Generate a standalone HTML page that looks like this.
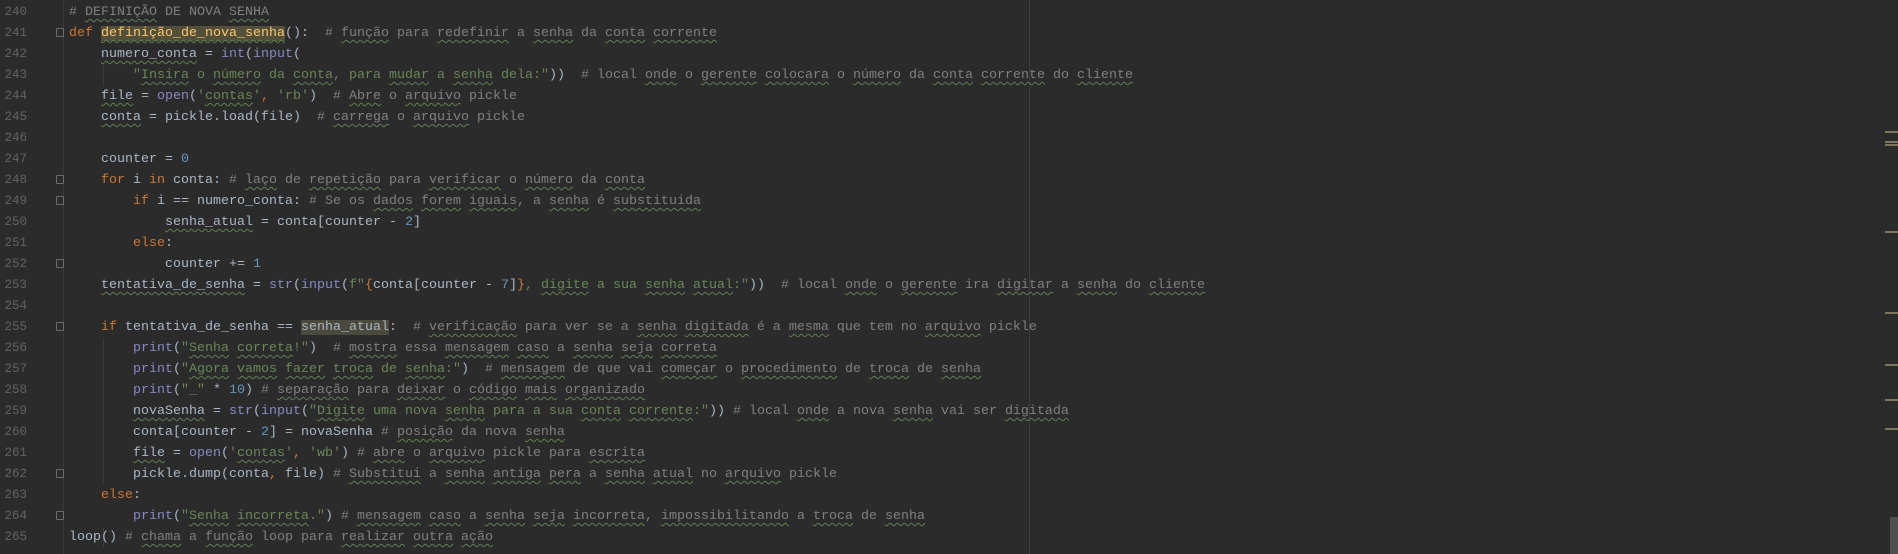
<!DOCTYPE html><html><head><meta charset="utf-8"><style>
body{margin:0;width:1898px;height:554px;background:#2b2b2b;overflow:hidden;position:relative;font-family:"Liberation Mono",monospace;font-size:13.33px;color:#a9b7c6}
.g{position:absolute;left:0;top:2px;width:27px;text-align:right;color:#606366;line-height:21px;font-size:12.5px}
.sep{position:absolute;left:63px;top:0;width:1px;height:554px;background:#3a3a3a}
.rm{position:absolute;left:1029px;top:0;width:1px;height:554px;background:#3d3d3d}
.code{position:absolute;left:69px;top:2px;line-height:21px;white-space:pre}
.k{color:#cc7832}.s{color:#6a8759}.c{color:#808080}.n{color:#6897bb}.b{color:#8888c6}
.u{text-decoration:underline wavy #5f7f4f;text-decoration-thickness:1px;text-underline-offset:3px}
.h1{background:#52503a;color:#ffc66d}.h2{background:#4b4a3c}
.f{position:absolute;left:56px;width:8px;height:9px;border:1px solid #6b6b6b;box-sizing:border-box;border-radius:1px}
.ig{position:absolute;width:1px;background:#3b3b3b}
.m{position:absolute;left:1885px;width:13px;height:2px;background:#7f7560}
.sb{position:absolute;left:1890px;top:517px;width:8px;height:37px;background:#4f4f4f}
</style></head><body>
<div class="sep"></div><div class="rm"></div>
<div class="g">240<br>241<br>242<br>243<br>244<br>245<br>246<br>247<br>248<br>249<br>250<br>251<br>252<br>253<br>254<br>255<br>256<br>257<br>258<br>259<br>260<br>261<br>262<br>263<br>264<br>265</div>
<div class="f" style="top:28px"></div>
<div class="f" style="top:175px"></div>
<div class="f" style="top:196px"></div>
<div class="f" style="top:259px"></div>
<div class="f" style="top:322px"></div>
<div class="f" style="top:469px"></div>
<div class="f" style="top:511px"></div>
<div class="ig" style="left:103px;top:65px;height:21px"></div>
<div class="ig" style="left:103px;top:338px;height:147px"></div>
<div class="ig" style="left:103px;top:527px;height:21px"></div>
<div class="code"><span class="c"># <span class="u">DEFINIÇÃO</span> DE NOVA <span class="u">SENHA</span></span>
<span class="k">def </span><span class="h1 u">definição_de_nova_senha</span>():  <span class="c"># <span class="u">função</span> para <span class="u">redefinir</span> a <span class="u">senha</span> da <span class="u">conta</span> <span class="u">corrente</span></span>
    <span class="u">numero_conta</span> = <span class="b">int</span>(<span class="b">input</span>(
        <span class="s">"<span class="u">Insira</span> o <span class="u">número</span> da <span class="u">conta</span>, para <span class="u">mudar</span> a <span class="u">senha</span> dela:"</span>))  <span class="c"># local <span class="u">onde</span> o <span class="u">gerente</span> <span class="u">colocara</span> o <span class="u">número</span> da <span class="u">conta</span> <span class="u">corrente</span> do <span class="u">cliente</span></span>
    <span class="u">file</span> = <span class="b">open</span>(<span class="s">'<span class="u">contas</span>'</span><span class="k">, </span><span class="s">'rb'</span>)  <span class="c"># <span class="u">Abre</span> o <span class="u">arquivo</span> pickle</span>
    <span class="u">conta</span> = pickle.load(file)  <span class="c"># <span class="u">carrega</span> o <span class="u">arquivo</span> pickle</span>

    counter = <span class="n">0</span>
    <span class="k">for </span>i <span class="k">in </span>conta: <span class="c"># <span class="u">laço</span> de <span class="u">repetição</span> para <span class="u">verificar</span> o <span class="u">número</span> da <span class="u">conta</span></span>
        <span class="k">if </span>i == numero_conta: <span class="c"># Se os <span class="u">dados</span> <span class="u">forem</span> <span class="u">iguais</span>, a <span class="u">senha</span> é <span class="u">substituida</span></span>
            <span class="u">senha_atual</span> = conta[counter - <span class="n">2</span>]
        <span class="k">else</span>:
            counter += <span class="n">1</span>
    <span class="u">tentativa_de_senha</span> = <span class="b">str</span>(<span class="b">input</span>(<span class="s">f"</span><span class="k">{</span>conta[counter - <span class="n">7</span>]<span class="k">}</span><span class="s">, <span class="u">digite</span> a sua <span class="u">senha</span> <span class="u">atual</span>:"</span>))  <span class="c"># local <span class="u">onde</span> o <span class="u">gerente</span> ira <span class="u">digitar</span> a <span class="u">senha</span> do <span class="u">cliente</span></span>

    <span class="k">if </span>tentativa_de_senha == <span class="h2">senha_atual</span>:  <span class="c"># <span class="u">verificação</span> para ver se a <span class="u">senha</span> <span class="u">digitada</span> é a <span class="u">mesma</span> que tem no <span class="u">arquivo</span> pickle</span>
        <span class="b">print</span>(<span class="s">"<span class="u">Senha</span> <span class="u">correta</span>!"</span>)  <span class="c"># <span class="u">mostra</span> essa <span class="u">mensagem</span> <span class="u">caso</span> a <span class="u">senha</span> <span class="u">seja</span> <span class="u">correta</span></span>
        <span class="b">print</span>(<span class="s">"<span class="u">Agora</span> <span class="u">vamos</span> <span class="u">fazer</span> <span class="u">troca</span> de <span class="u">senha</span>:"</span>)  <span class="c"># <span class="u">mensagem</span> de que vai <span class="u">começar</span> o <span class="u">procedimento</span> de <span class="u">troca</span> de <span class="u">senha</span></span>
        <span class="b">print</span>(<span class="s">"_"</span> * <span class="n">10</span>) <span class="c"># <span class="u">separação</span> para <span class="u">deixar</span> o <span class="u">código</span> <span class="u">mais</span> <span class="u">organizado</span></span>
        <span class="u">novaSenha</span> = <span class="b">str</span>(<span class="b">input</span>(<span class="s">"<span class="u">Digite</span> uma nova <span class="u">senha</span> para a sua <span class="u">conta</span> <span class="u">corrente</span>:"</span>)) <span class="c"># local <span class="u">onde</span> a nova <span class="u">senha</span> vai ser <span class="u">digitada</span></span>
        conta[counter - <span class="n">2</span>] = novaSenha <span class="c"># <span class="u">posição</span> da nova <span class="u">senha</span></span>
        <span class="u">file</span> = <span class="b">open</span>(<span class="s">'<span class="u">contas</span>'</span><span class="k">, </span><span class="s">'wb'</span>) <span class="c"># <span class="u">abre</span> o <span class="u">arquivo</span> pickle para <span class="u">escrita</span></span>
        pickle.dump(conta<span class="k">, </span>file) <span class="c"># <span class="u">Substitui</span> a <span class="u">senha</span> <span class="u">antiga</span> <span class="u">pera</span> a <span class="u">senha</span> <span class="u">atual</span> no <span class="u">arquivo</span> pickle</span>
    <span class="k">else</span>:
        <span class="b">print</span>(<span class="s">"<span class="u">Senha</span> <span class="u">incorreta</span>."</span>) <span class="c"># <span class="u">mensagem</span> <span class="u">caso</span> a <span class="u">senha</span> <span class="u">seja</span> <span class="u">incorreta</span>, <span class="u">impossibilitando</span> a <span class="u">troca</span> de <span class="u">senha</span></span>
loop() <span class="c"># <span class="u">chama</span> a <span class="u">função</span> loop para <span class="u">realizar</span> <span class="u">outra</span> <span class="u">ação</span></span></div>
<div class="m" style="top:131px"></div><div class="m" style="top:141px"></div><div class="m" style="top:144px"></div>
<div class="m" style="top:231px"></div><div class="m" style="top:312px"></div><div class="m" style="top:364px"></div>
<div class="m" style="top:399px"></div><div class="m" style="top:428px"></div>
<div class="sb"></div>
</body></html>
